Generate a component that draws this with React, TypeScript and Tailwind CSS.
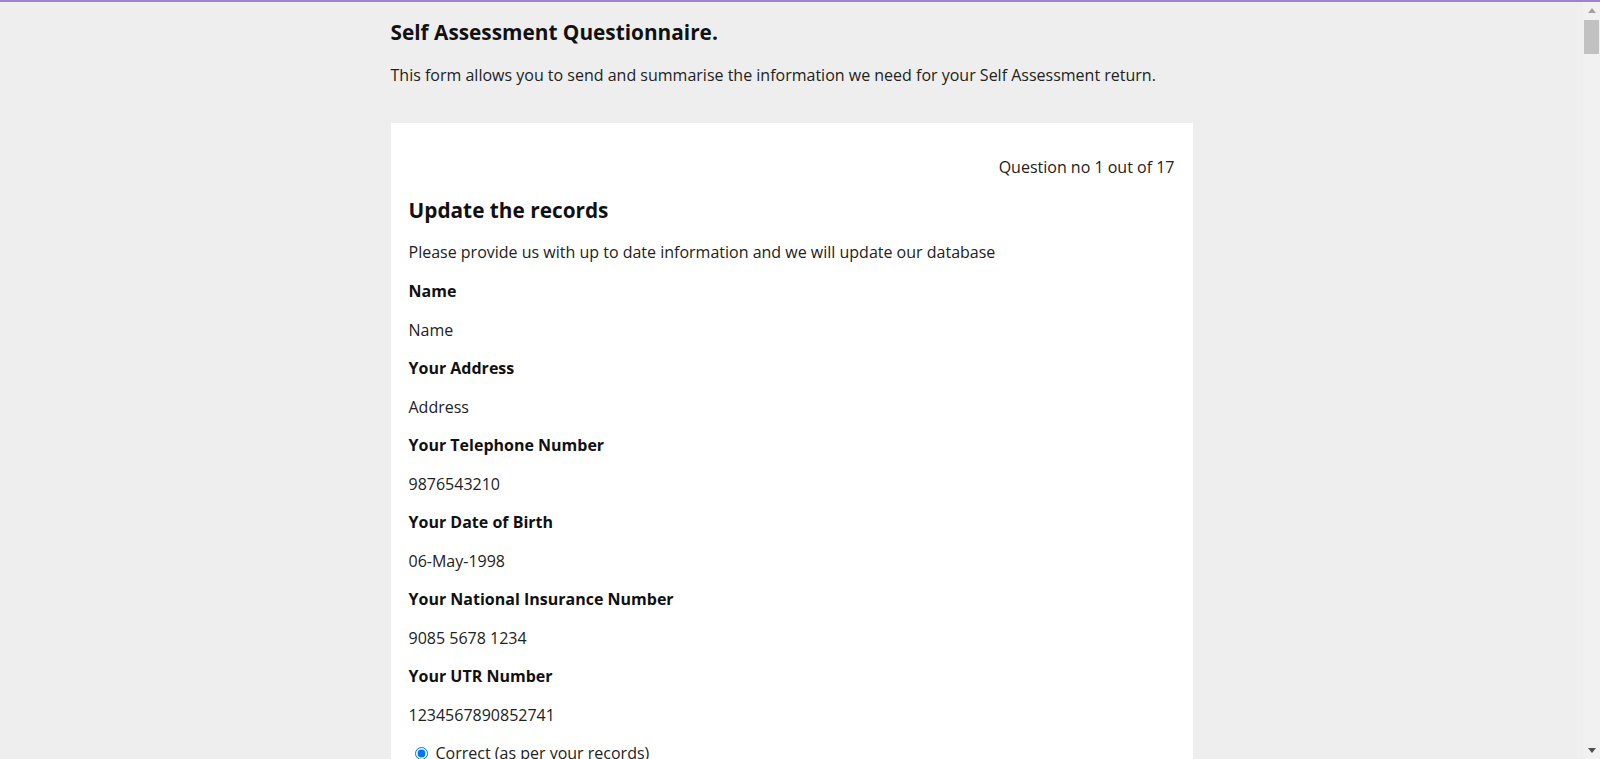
import React from "react";

const fields: [string, string][] = [
  ["Name", "Name"],
  ["Your Address", "Address"],
  ["Your Telephone Number", "9876543210"],
  ["Your Date of Birth", "06-May-1998"],
  ["Your National Insurance Number", "9085 5678 1234"],
  ["Your UTR Number", "1234567890852741"],
];

function Scrollbar() {
  return (
    <div className="flex h-full w-[17px] shrink-0 flex-col items-center bg-[#f1f1f1]">
      <div className="flex h-[17px] w-full items-center justify-center">
        <svg width="8" height="5" viewBox="0 0 8 5">
          <polygon points="4,0 8,5 0,5" fill="#a3a3a3" />
        </svg>
      </div>
      <div className="mt-[1px] h-[34px] w-[15px] bg-[#c1c1c1]" />
      <div className="flex-1" />
      <div className="flex h-[17px] w-full items-center justify-center">
        <svg width="8" height="5" viewBox="0 0 8 5">
          <polygon points="0,0 8,0 4,5" fill="#505050" />
        </svg>
      </div>
    </div>
  );
}

export default function App() {
  return (
    <div
      className="flex h-[759px] flex-col overflow-hidden bg-[#eeeeee] text-[#222222]"
      style={{ fontFamily: '"Open Sans", "Noto Sans", sans-serif' }}
    >
      <div className="h-[2px] shrink-0 bg-[#a27fd4]" />
      <div className="flex min-h-0 flex-1">
        <main className="min-w-0 flex-1 overflow-hidden">
          <div className="mx-auto w-[802px] pb-10">
            <h1 className="mt-[16px] text-[20.8px] font-bold leading-[29px] text-[#111111]">
              Self Assessment Questionnaire.
            </h1>
            <p className="mt-[16px] text-[16px] leading-[24px]">
              This form allows you to send and summarise the information we need for your Self Assessment return.
            </p>
            <div className="mt-[36px] bg-white px-[18px] pt-[32px] pb-10">
              <div className="text-right text-[16px] leading-[24px]">Question no 1 out of 17</div>
              <h2 className="mt-[17px] text-[20.8px] font-bold leading-[28px] text-[#111111]">
                Update the records
              </h2>
              <p className="mt-[16px] text-[16px] leading-[24px]">
                Please provide us with up to date information and we will update our database
              </p>
              <div className="mt-[15px] flex flex-col gap-[14.5px]">
                {fields.map(([label, value]) => (
                  <React.Fragment key={label}>
                    <div className="text-[16px] font-bold leading-[24px] text-[#111111]">{label}</div>
                    <div className="text-[16px] leading-[24px]">{value}</div>
                  </React.Fragment>
                ))}
                <label className="flex items-center gap-[8px] pl-[6px] text-[16px] leading-[24px]">
                  <input type="radio" name="rec" defaultChecked className="m-0 h-[13px] w-[13px] accent-[#0075ff]" />
                  <span>Correct (as per your records)</span>
                </label>
                <label className="flex items-center gap-[8px] pl-[6px] text-[16px] leading-[24px]">
                  <input type="radio" name="rec" className="m-0 h-[13px] w-[13px]" />
                  <span>Incorrect (please update)</span>
                </label>
              </div>
            </div>
          </div>
        </main>
        <Scrollbar />
      </div>
    </div>
  );
}
